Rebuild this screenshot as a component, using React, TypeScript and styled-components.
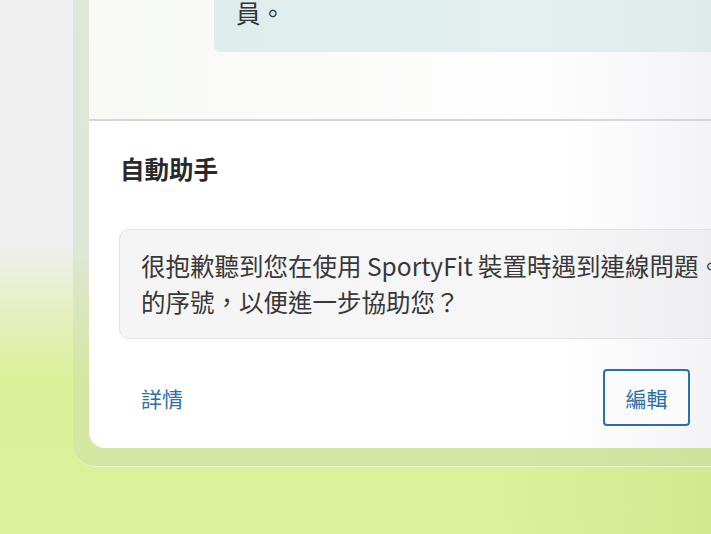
import React from "react";
import styled, { createGlobalStyle } from "styled-components";

const GlobalStyle = createGlobalStyle`
  html, body {
    margin: 0;
    padding: 0;
  }
  body {
    width: 711px;
    height: 534px;
    overflow: hidden;
    font-family: "Noto Sans CJK TC", "Noto Sans", sans-serif;
    background:
      linear-gradient(90deg, rgba(210, 228, 140, 0) 70%, rgba(200, 222, 130, 0.45) 100%),
      linear-gradient(180deg, #f0f0f0 0, #efefef 245px, #e6efc4 310px, #dcf09a 375px, #dcf19a 534px);
  }
`;

const Frame = styled.div`
  margin: -40px 0 0 73px;
  width: 693px;
  box-sizing: border-box;
  padding: 16px 16px 18px 16px;
  border-radius: 0 0 0 22px;
  background: rgba(200, 215, 175, 0.38);
  border-bottom: 1px solid rgba(255, 255, 255, 0.55);
`;

const Card = styled.div`
  border-radius: 0 0 0 16px;
  overflow: hidden;
  background: linear-gradient(90deg, #ffffff 0, #ffffff 470px, #f2f1f4 640px);
`;

const History = styled.div`
  display: flex;
  padding: 0 0 67px 125px;
  background: linear-gradient(90deg, rgba(246, 248, 243, 0.8) 0, rgba(250, 250, 250, 0.4) 400px, rgba(242, 241, 244, 0.3) 100%);
  border-bottom: 2px solid #d6d6d8;
`;

const Bubble = styled.div`
  flex: 1;
  padding: 19px 22px 21px;
  border-radius: 0 0 0 6px;
  background: linear-gradient(90deg, #dfeded 0, #e3f0ef 60%, #deeaea 100%);
  font-size: 24.5px;
  line-height: 36px;
  color: #333333;
`;

const Section = styled.div`
  padding: 30px 30px 0;
`;

const Title = styled.h2`
  margin: 0 0 42px 1px;
  font-size: 24.5px;
  line-height: 36px;
  font-weight: 700;
  color: #2a2a2a;
`;

const MessageBox = styled.div`
  padding: 18px 21px;
  border: 1px solid #e2e2e4;
  border-radius: 10px;
  background: linear-gradient(90deg, #f5f5f6 0, #f6f6f7 70%, #eeeef0 100%);
  font-size: 24.5px;
  line-height: 36px;
  color: #383838;
  white-space: nowrap;
`;

const Footer = styled.div`
  display: flex;
  align-items: center;
  justify-content: space-between;
  padding: 30px 60px 22px 52px;
`;

const LinkButton = styled.a`
  font-size: 21px;
  line-height: 32px;
  color: #2e6ea6;
  text-decoration: none;
  cursor: pointer;
`;

const OutlineButton = styled.button`
  width: 87px;
  height: 57px;
  box-sizing: border-box;
  border: 2px solid #2e6ea6;
  border-radius: 4px;
  background: #fbfbfc;
  color: #2e6ea6;
  font-family: inherit;
  font-size: 21px;
  cursor: pointer;
`;

export default function App() {
  return (
    <>
      <GlobalStyle />
      <Frame>
        <Card>
          <History>
            <Bubble>員。</Bubble>
          </History>
          <Section>
            <Title>自動助手</Title>
            <MessageBox>
              很抱歉聽到您在使用 SportyFit 裝置時遇到連線問題。請提供您裝置
              <br />
              的序號，以便進一步協助您？
            </MessageBox>
          </Section>
          <Footer>
            <LinkButton>詳情</LinkButton>
            <OutlineButton>編輯</OutlineButton>
          </Footer>
        </Card>
      </Frame>
    </>
  );
}
